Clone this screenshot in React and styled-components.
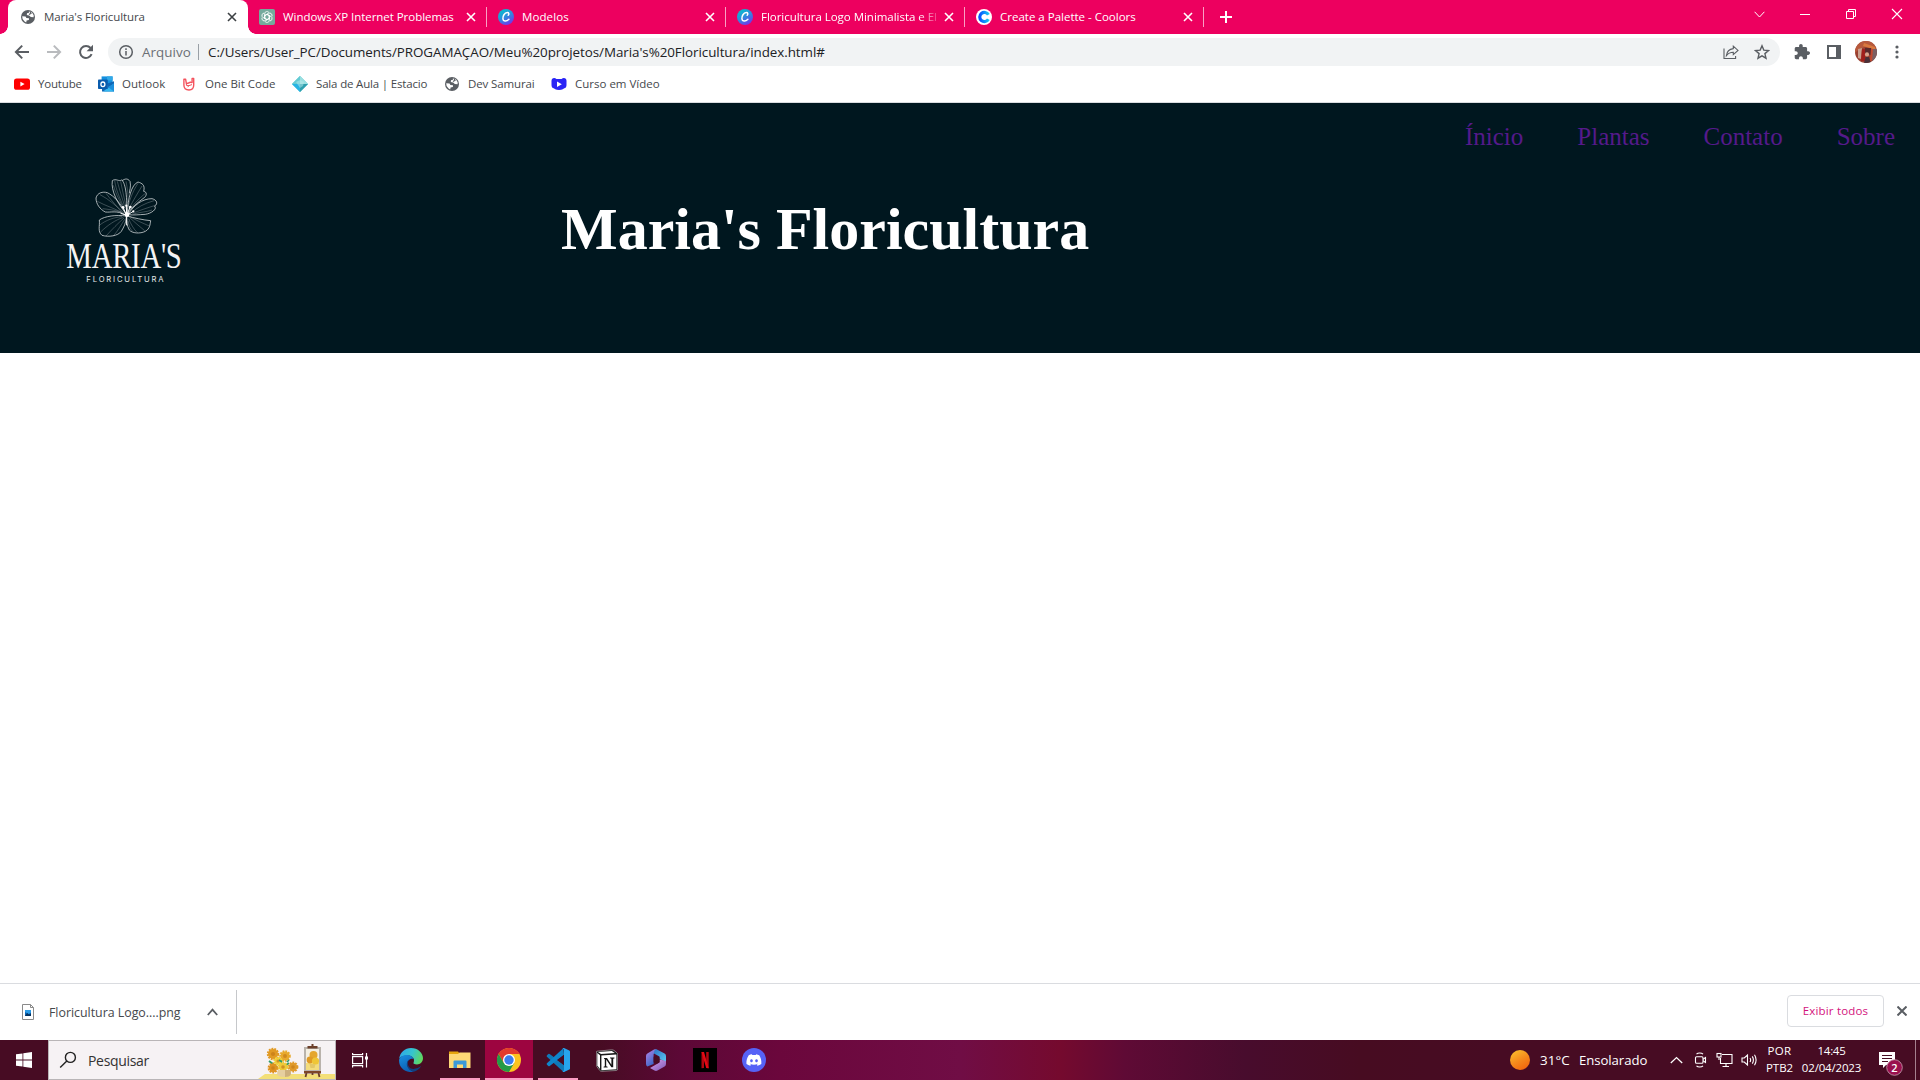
import React from 'react';
import styled, { createGlobalStyle } from 'styled-components';

const GlobalStyle = createGlobalStyle`
  * { box-sizing: border-box; }
  html, body { margin: 0; padding: 0; }
  body {
    width: 1920px;
    height: 1080px;
    overflow: hidden;
    background: #fff;
    font-family: "Open Sans", "Noto Sans", sans-serif;
  }
  svg { display: block; flex: none; }
`;

const Screen = styled.div`
  display: flex;
  flex-direction: column;
  width: 1920px;
  height: 1080px;
  background: #fff;
`;

const Label = styled.span`
  font-size: ${(p) => p.$size || 11.5}px;
  letter-spacing: ${(p) => p.$track || 0}px;
  color: ${(p) => p.$color || 'inherit'};
  line-height: 16px;
  white-space: nowrap;
`;

/* ---------- tab strip ---------- */

const TabStrip = styled.div`
  display: flex;
  height: 34px;
  padding-left: 8px;
  background: #ed005f;
  color: #fff;
`;

const ActiveTab = styled.div`
  position: relative;
  display: flex;
  align-items: center;
  width: 240px;
  height: 34px;
  padding: 0 8px 0 12px;
  gap: 8px;
  border-radius: 8px 8px 0 0;
  background: #fff;
  color: #45484c;
  &::before,
  &::after {
    content: '';
    position: absolute;
    bottom: 0;
    width: 8px;
    height: 8px;
  }
  &::before {
    left: -8px;
    background: radial-gradient(circle at 0 0, transparent 7.5px, #fff 8px);
  }
  &::after {
    right: -8px;
    background: radial-gradient(circle at 100% 0, transparent 7.5px, #fff 8px);
  }
`;

const Tab = styled.div`
  display: flex;
  align-items: center;
  width: 239px;
  height: 34px;
  padding: 0 8px 0 11px;
  gap: 8px;
  background: linear-gradient(#f9a0c4, #f9a0c4) right 7px / 1px 20px no-repeat;
`;

const TabTitle = styled(Label)`
  flex: 1;
  min-width: 0;
  ${(p) =>
    p.$fade &&
    `margin-right: -8px;
     mask-image: linear-gradient(90deg, #000 158px, transparent 182px);`}
`;

const NewTab = styled.div`
  display: flex;
  align-items: center;
  width: 44px;
  padding-left: 15px;
`;

const WindowControls = styled.div`
  display: flex;
  margin-left: auto;
  height: 28px;
`;

const WindowButton = styled.div`
  display: flex;
  align-items: center;
  justify-content: center;
  width: 46px;
  height: 28px;
`;

/* ---------- toolbar ---------- */

const Toolbar = styled.div`
  display: flex;
  align-items: center;
  height: 36px;
  padding-left: 12px;
`;

const NavButtons = styled.div`
  display: flex;
  gap: 12px;
  width: 96px;
`;

const Omnibox = styled.div`
  display: flex;
  flex: none;
  align-items: center;
  width: 1672px;
  height: 28px;
  padding: 0 10px 0 9px;
  border-radius: 14px;
  background: #f1f3f4;
`;

const Scheme = styled(Label)`
  width: 63px;
  padding-left: 7px;
`;

const Address = styled(Label)`
  display: flex;
  align-items: center;
  height: 16px;
  padding-left: 9px;
  border-left: 1px solid #9aa0a6;
  margin-right: auto;
`;

const OmniboxActions = styled.div`
  display: flex;
  gap: 15px;
`;

const ToolbarActions = styled.div`
  display: flex;
  align-items: center;
  padding-left: 14px;
`;

const ActionSlot = styled.div`
  display: flex;
  flex: none;
  justify-content: center;
  width: ${(p) => p.$w}px;
`;

const BookmarkBar = styled.div`
  display: flex;
  align-items: center;
  height: 33px;
  padding: 0 0 5px 14px;
  border-bottom: 1px solid #dadce0;
  color: #45484c;
`;

const Bookmark = styled.div`
  display: flex;
  align-items: center;
  gap: 8px;
  width: ${(p) => p.$w}px;
`;

/* ---------- page ---------- */

const SiteHeader = styled.header`
  height: 250px;
  background: #00171f;
`;

const SiteNav = styled.nav`
  display: flex;
  justify-content: flex-end;
  gap: 54px;
  height: 48px;
  padding: 20px 25px 0 0;
`;

const SiteLink = styled.a`
  font: 25px/28px "Liberation Serif", "Times New Roman", serif;
  color: #551a8b;
`;

const Brand = styled.div`
  display: flex;
  align-items: flex-start;
  padding: 9px 0 0 50px;
`;

const SiteTitle = styled.h1`
  margin: 35px 0 0 361px;
  font: bold 60px/68px "Liberation Serif", "Times New Roman", serif;
  color: #fff;
`;

const PageBody = styled.main`
  flex: 1;
  background: #fff;
`;

/* ---------- download shelf ---------- */

const Shelf = styled.div`
  display: flex;
  align-items: flex-start;
  height: 57px;
  padding-top: 6px;
  border-top: 1px solid #dadce0;
`;

const DownloadItem = styled.div`
  display: flex;
  align-items: center;
  width: 237px;
  height: 44px;
  padding: 0 18px 0 20px;
  border-right: 1px solid #c6c8cb;
`;

const DownloadName = styled(Label)`
  flex: 1;
  padding: 2px 0 0 13px;
`;

const ShowAll = styled.div`
  display: flex;
  align-items: center;
  justify-content: center;
  width: 97px;
  height: 32px;
  margin: 5px 13px 0 auto;
  border: 1px solid #dadce0;
  border-radius: 4px;
`;

const ShelfClose = styled.div`
  width: 23px;
  padding-top: 16px;
`;

/* ---------- taskbar ---------- */

const TaskBar = styled.div`
  display: flex;
  height: 40px;
  color: #fff;
  background: linear-gradient(
    90deg,
    #470c23 0,
    #470c23 600px,
    #5c0836 680px,
    #6b073c 780px,
    #700d45 960px,
    #750a2e 1060px,
    #5f0a35 1125px,
    #480c2d 1245px,
    #470c21 1360px,
    #470c23 1500px
  );
`;

const StartButton = styled.div`
  display: flex;
  align-items: center;
  justify-content: center;
  width: 48px;
`;

const SearchBox = styled.div`
  display: flex;
  align-items: center;
  width: 288px;
  padding-left: 10px;
  border: 1px solid #b9b5b7;
  background: #f6f2f4;
  color: #333;
`;

const SearchText = styled(Label)`
  flex: 1;
  padding: 2px 0 0 11px;
`;

const AppButton = styled.div`
  display: flex;
  align-items: center;
  justify-content: center;
  width: 48px;
  height: 40px;
  margin-right: ${(p) => p.$after || 1}px;
  background: ${(p) => (p.$active ? '#9d0540' : 'transparent')};
  ${(p) =>
    p.$running &&
    `background-image: linear-gradient(#fb9dc3, #fb9dc3);
     background-size: ${p.$active ? 48 : 40}px 2px;
     background-position: center bottom;
     background-repeat: no-repeat;`}
`;

const Tray = styled.div`
  display: flex;
  align-items: center;
  margin-left: auto;
`;

const Weather = styled.div`
  display: flex;
  align-items: center;
  gap: 9px;
  width: 160px;
`;

const Sun = styled.span`
  width: 20px;
  height: 20px;
  margin-right: 1px;
  border-radius: 50%;
  background: linear-gradient(150deg, #fbc02d 5%, #f68a1c 50%, #f2600c 95%);
`;

const TrayIcons = styled.div`
  display: flex;
  align-items: center;
  gap: 8px;
  width: 97px;
`;

const Overflow = styled.div`
  padding-right: 3px;
`;

const Stack = styled.div`
  display: flex;
  flex-direction: column;
  align-items: center;
  width: ${(p) => p.$w}px;
  gap: 1px;
  padding-bottom: 2px;
`;

const Notifications = styled.div`
  display: flex;
  width: 45px;
  height: 40px;
  padding: 8px 0 0 8px;
  border-right: 1px solid #a5808f;
  margin-right: 4px;
`;

/* ---------- icons ---------- */

const Globe = () => (
  <svg width="16" height="16" viewBox="0 0 16 16">
    <circle cx="8" cy="8" r="7" fill="#5a5e63" />
    <path d="M2.2 7.2 5.6 7.4 6.4 9 9 9.2 8.9 11 6.6 11.4 6.2 13.4 4.6 12.4 2.6 10Z" fill="#fff" />
    <path d="M8.8 2.4 9 3.8 7 4.2 6.8 6 9.2 6.6 10.8 8 13.6 8.2 13.7 6.2 12.2 3.8 10.6 2.6Z" fill="#fff" />
    <path d="M9.9 2.3 11 4.2 9 5.4" stroke="#5a5e63" strokeWidth="1.2" fill="none" />
  </svg>
);

const Close = ({ size = 8, color = '#fff', w = 1.6, box = 16 }) => (
  <svg width={box} height={box} viewBox={`${-box / 2} ${-box / 2} ${box} ${box}`}>
    <path
      d={`M${-size / 2} ${-size / 2} L${size / 2} ${size / 2} M${size / 2} ${-size / 2} L${-size / 2} ${size / 2}`}
      stroke={color}
      strokeWidth={w}
    />
  </svg>
);

const ChatGpt = () => (
  <svg width="16" height="16" viewBox="0 0 16 16">
    <rect width="16" height="16" rx="2" fill="#74aa9c" />
    <g fill="none" stroke="#fff" strokeWidth=".8">
      {[0, 60, 120, 180, 240, 300].map((a) => (
        <path key={a} transform={`rotate(${a} 8 8)`} d="M5.6 9.2V4.9A2.4 2.4 0 0 1 10 3.6M5.8 6.7 8 5.4 11 7" />
      ))}
    </g>
  </svg>
);

const Canva = ({ id }) => (
  <svg width="16" height="16" viewBox="0 0 16 16">
    <defs>
      <linearGradient id={id} x1=".1" y1="0" x2=".7" y2="1">
        <stop offset="0" stopColor="#00c9c8" />
        <stop offset=".5" stopColor="#2d8fdd" />
        <stop offset="1" stopColor="#7433ea" />
      </linearGradient>
    </defs>
    <circle cx="8" cy="8" r="8" fill={`url(#${id})`} />
    <path
      d="M10.2 6.2C11.3 5.200 10.900 3.400 9.200 3.600 6.600 3.800 4.600 7 4.900 9.800 5.200 12.600 8.400 13 10.900 10.200"
      fill="none"
      stroke="#fff"
      strokeWidth="1.5"
      strokeLinecap="round"
    />
  </svg>
);

const Coolors = () => (
  <svg width="16" height="16" viewBox="0 0 16 16">
    <defs>
      <linearGradient id="coolors" x1="0" x2="1">
        <stop offset="0" stopColor="#0a52ff" />
        <stop offset="1" stopColor="#12c4f5" />
      </linearGradient>
    </defs>
    <circle cx="8" cy="8" r="8" fill="#fff" />
    <path d="M12.400 5.800A4.600 4.600 0 1 0 12.400 10.200" fill="none" stroke="url(#coolors)" strokeWidth="3.200" />
  </svg>
);

const BackArrow = ({ color, flip }) => (
  <svg width="20" height="20" viewBox="0 0 20 20">
    <path
      transform={flip ? 'matrix(-1 0 0 1 20 0)' : undefined}
      d="M17 10H4.2M10.2 3.6 3.9 10l6.3 6.4"
      fill="none"
      stroke={color}
      strokeWidth="2"
    />
  </svg>
);

const Reload = () => (
  <svg width="20" height="20" viewBox="0 0 20 20">
    <path d="M15.6 12.2A6 6 0 1 1 14.6 6" fill="none" stroke="#5a5e63" strokeWidth="2" />
    <path d="M17 2.8V9.2H10.6Z" fill="#5a5e63" />
  </svg>
);

const Info = () => (
  <svg width="18" height="18" viewBox="0 0 18 18">
    <circle cx="9" cy="9" r="6.3" fill="none" stroke="#5a5e63" strokeWidth="1.5" />
    <path d="M9 8v4.6M9 5.2v1.7" stroke="#5a5e63" strokeWidth="1.5" />
  </svg>
);

const Share = () => (
  <svg width="16" height="16" viewBox="0 0 16 16" fill="none" stroke="#5a5e63" strokeWidth="1.1">
    <path d="M1 4.4V14.5H12.6V12" />
    <path d="M10.3 2.2 15 6.4 10.3 10.6V8.2C7.2 8.2 5 9.4 3.4 11.6 3.8 7.8 6.4 5 10.3 4.6Z" />
  </svg>
);

const Star = () => (
  <svg width="16" height="16" viewBox="0 0 16 16">
    <path
      d="m8 1.8 1.8 4.3 4.7.4-3.6 3.1 1.1 4.6L8 11.8l-4 2.4 1.1-4.6L1.5 6.5l4.7-.4Z"
      fill="none"
      stroke="#5a5e63"
      strokeWidth="1.4"
    />
  </svg>
);

const Puzzle = () => (
  <svg width="16" height="16" viewBox="1 1 22 22" fill="#5a5e63">
    <path d="M20.5 11H19V7c0-1.1-.9-2-2-2h-4V3.5C13 2.12 11.88 1 10.5 1S8 2.12 8 3.5V5H4c-1.1 0-1.99.9-1.99 2v3.8H3.5c1.49 0 2.7 1.21 2.7 2.7s-1.21 2.7-2.7 2.7H2V20c0 1.1.9 2 2 2h3.8v-1.5c0-1.49 1.21-2.7 2.7-2.7 1.49 0 2.7 1.21 2.7 2.7V22H17c1.1 0 2-.9 2-2v-4h1.5c1.38 0 2.5-1.12 2.5-2.5S21.88 11 20.5 11z" />
  </svg>
);

const SidePanel = () => (
  <svg width="14" height="14" viewBox="0 0 14 14">
    <rect width="14" height="14" fill="#5a5e63" />
    <rect x="2" y="2" width="7" height="10" fill="#fff" />
  </svg>
);

const Avatar = () => (
  <svg width="22" height="22" viewBox="0 0 22 22">
    <defs>
      <clipPath id="avatar">
        <circle cx="11" cy="11" r="11" />
      </clipPath>
    </defs>
    <g clipPath="url(#avatar)">
      <rect width="22" height="22" fill="#9a4030" />
      <path d="M0 0H22V7L13 5 4 8 0 12Z" fill="#b7593c" />
      <path d="M9 2 20 6 21 9 8 5Z" fill="#d9793f" />
      <path d="M3 8 7 7 6 18 3 17Z" fill="#c9a08f" />
      <path d="M7 8H10V20H6Z" fill="#a11f1c" />
      <path d="M10 7H16V14H10Z" fill="#5a2a2c" />
      <circle cx="12" cy="13.4" r="2.1" fill="#d9a48c" />
      <path d="M9 22 10.5 16 14 16 16 22Z" fill="#4a3038" />
      <path d="M16 8 18 8 18 19 15 20Z" fill="#c4482f" />
      <path d="M18 8H22V20H17Z" fill="#7a5f62" />
    </g>
  </svg>
);

const Dots = () => (
  <svg width="4" height="14" viewBox="0 0 4 14" fill="#5a5e63">
    <circle cx="2" cy="2" r="1.6" />
    <circle cx="2" cy="7" r="1.6" />
    <circle cx="2" cy="12" r="1.6" />
  </svg>
);

const YoutubeIcon = () => (
  <svg width="16" height="16" viewBox="0 0 16 16">
    <rect y="2.4" width="16" height="11.4" rx="2.6" fill="#f00" />
    <path d="M6.4 5.7 10.6 8.1 6.4 10.5Z" fill="#fff" />
  </svg>
);

const OutlookIcon = () => (
  <svg width="16" height="16" viewBox="0 0 16 16">
    <rect x="3.6" y=".4" width="11" height="9" fill="#1490df" />
    <rect x="9" y=".4" width="5.6" height="4" fill="#32a9e7" />
    <path d="M9.4 7.5 16 5.2V15.4H4V12H9.4Z" fill="#1066b5" />
    <path d="M16 7.5V15.6H5Z" fill="#35b8f1" />
    <path d="M16 7.5 10 11 16 15.6Z" fill="#1c8fdc" />
    <rect y="3.6" width="9.8" height="9.4" rx=".8" fill="#0a5cad" />
    <ellipse cx="4.9" cy="8.3" rx="2" ry="2.3" fill="none" stroke="#fff" strokeWidth="1.3" />
  </svg>
);

const OneBitIcon = () => (
  <svg width="16" height="16" viewBox="0 0 16 16">
    <path
      d="M2.900 3.200V9C2.900 12.200 5 14 8 14 11 14 12.700 12.200 12.700 9V2.400H11.100V6.600L9.400 6.200 7.600 7 5.400 7.600 4.600 3.200Z"
      fill="#fff"
      stroke="#f4525d"
      strokeWidth="1.400"
      strokeLinejoin="round"
    />
    <path d="M5.400 7.600V9.400L8 9.600 6.600 11.200M8 9.600 11 8.600" fill="none" stroke="#f4525d" strokeWidth="1" />
  </svg>
);

const EstacioIcon = () => (
  <svg width="16" height="16" viewBox="0 0 16 16">
    <path d="M8 0 16 8 8 16 0 8Z" fill="#45c3cf" />
    <path d="M8 0 16 8H8Z" fill="#9adfe0" />
    <path d="M8 0V8H0Z" fill="#64cbd4" />
    <path d="M8 16 16 8H8Z" fill="#2f9fae" />
    <path d="M8 16V8H0Z" fill="#27b4e4" />
    <path d="M4 6 8 4 12 6 11 10 8 12Z" fill="#b9ecec" opacity=".5" />
  </svg>
);

const CursoIcon = () => (
  <svg width="16" height="16" viewBox="0 0 16 16">
    <circle cx="3.200" cy="4.600" r="2.600" fill="#2a24f5" />
    <circle cx="12.800" cy="4.600" r="2.600" fill="#2a24f5" />
    <rect x=".5" y="3" width="15" height="9.600" rx="3.600" fill="#2a24f5" />
    <ellipse cx="8" cy="11.500" rx="5" ry="2.400" fill="#2a24f5" />
    <path d="M6 5.6 10.8 8.3 6 11Z" fill="#fff" />
  </svg>
);

const Vein = styled.path`
  fill: none;
  stroke: #c9d0d2;
  stroke-width: 1.2;
  opacity: 0.75;
`;

const Petal = styled.path`
  fill: none;
  stroke: #dfe4e5;
  stroke-width: 2.2;
`;

const BrandLogo = () => (
  <svg width="150" height="130" viewBox="0 0 450 390">
    <Petal d="M228 165C200 150 182 158 166 156 150 148 138 132 138 114 142 98 158 94 172 98 192 108 214 130 228 165" />
    <Petal d="M226 158C204 132 182 92 187 62 197 54 208 66 214 60 222 62 232 90 230 155" />
    <Petal d="M216 62C226 56 232 54 240 64 244 80 238 92 238 100" />
    <Petal d="M232 158C234 116 244 74 264 66 276 70 286 74 281 94 292 96 290 106 284 112 262 128 246 142 233 160" />
    <Petal d="M235 162C252 136 276 116 306 116 322 120 324 132 314 138 322 148 304 160 286 163 266 164 250 166 235 164" />
    <Petal d="M232 168C252 174 280 180 302 182 300 194 300 206 286 214 270 222 246 220 238 210 230 196 230 184 230 170" />
    <Petal d="M228 168C200 164 164 168 148 180 150 198 142 214 156 226 176 232 204 228 214 214 222 200 228 190 229 170" />
    <Vein d="M222 158C200 140 178 118 150 104M220 160C196 146 168 138 142 124M216 158C196 134 180 116 168 100M214 156C190 150 176 148 158 146" />
    <Vein d="M224 148C210 116 198 90 194 62M226 146C216 112 208 88 202 64M228 140C222 110 216 86 212 64M216 136C206 116 196 98 190 76" />
    <Vein d="M234 144C240 112 252 88 264 70M236 148C250 120 264 98 276 78M238 150C256 126 272 112 286 100M233 130C236 108 232 84 228 64" />
    <Vein d="M244 158C262 142 284 130 312 122M246 160C268 152 290 144 316 136M250 162C272 156 290 156 306 150" />
    <Vein d="M238 172C252 184 268 200 284 212M240 170C260 182 280 190 298 198M236 176C242 192 250 206 262 218M234 182C236 196 240 206 248 214" />
    <Vein d="M220 172C196 180 172 196 152 216M222 174C204 190 186 208 168 228M216 170C192 172 168 180 148 196M224 178C214 194 204 212 190 228" />
    <path
      d="M230 166 219 142M230 166 229 136M230 166 241 140M230 166 250 154M230 166 212 160M230 166V196"
      stroke="#fff"
      strokeWidth="3"
      fill="none"
    />
    <g fill="#fff">
      <circle cx="219" cy="142" r="4" />
      <circle cx="229" cy="137" r="3.4" />
      <circle cx="241" cy="141" r="4" />
      <circle cx="250" cy="154" r="3.4" />
      <circle cx="231" cy="164" r="7" />
    </g>
    <text
      transform="translate(49 323) scale(.785 1)"
      fontFamily="Liberation Serif, Times New Roman, serif"
      fontSize="110"
      letterSpacing="-1"
      fill="#f4f4f4"
    >
      MARIA&apos;S
    </text>
    <text
      x="109"
      y="365"
      textLength="232"
      fontFamily="Inter, sans-serif"
      fontSize="23"
      fill="#e4e8e9"
    >
      FLORICULTURA
    </text>
  </svg>
);

const FileIcon = () => (
  <svg width="16" height="18" viewBox="0 0 16 18">
    <path d="M2.5 1.5H10.5L13.5 4.5V16.5H2.5Z" fill="#fff" stroke="#8a8a8a" />
    <path d="M10.5 1.5V4.5H13.5" fill="none" stroke="#8a8a8a" />
    <rect x="5" y="7" width="6" height="6" fill="#0c64b4" />
    <path d="M5 7H11V9.4L8.6 11 5 9Z" fill="#2b9be6" />
    <path d="M5 13 7.2 10 9 11.6 11 10.6V13Z" fill="#07335f" />
  </svg>
);

const WindowsLogo = () => (
  <svg width="16" height="16" viewBox="0 0 16 16" fill="#fff">
    <path d="M0 2.3 6.5 1.4V7.5H0ZM7.3 1.3 16 0V7.5H7.3ZM0 8.4H6.5V14.6L0 13.7ZM7.3 8.4H16V16L7.3 14.7Z" />
  </svg>
);

const SearchIcon = () => (
  <svg width="18" height="18" viewBox="0 0 18 18" fill="none" stroke="#222" strokeWidth="1.4">
    <circle cx="11.4" cy="6.4" r="5" />
    <path d="M7.8 10 1.2 16.6" />
  </svg>
);

const blooms = [
  [34, 13, 6, '#e19a24'],
  [46, 15, 5.6, '#e8a92c'],
  [34, 27, 5.2, '#df9322'],
  [54, 26, 5.2, '#e09a2a'],
  [44, 26, 5.2, '#efc93a'],
  [39, 20, 4.4, '#f1cf3c'],
];

const Sunflowers = () => (
  <svg width="80" height="38" viewBox="0 0 80 38">
    <path d="M10 33H80V38H3Z" fill="#f3df78" />
    <g transform="translate(-16 0)">
      <path d="M38 26 30 20M44 26 50 22M42 26V18" stroke="#2f9c6c" strokeWidth="2" />
      {blooms.map(([x, y, r, c], i) => (
        <g key={i}>
          <circle cx={x} cy={y} r={r - 1} fill={c} />
          <circle cx={x} cy={y} r={r - 0.8} fill="none" stroke={c} strokeWidth="2" strokeDasharray="1.8 1" />
          <circle cx={x} cy={y} r={r * 0.35} fill="#c57a18" opacity=".7" />
        </g>
      ))}
      <path d="M40 19 43 21M48 21 50 19" stroke="#2f9c6c" strokeWidth="1.600" />
      <path d="M39 29H51C53 33 52 36 45 36 38 36 37 33 39 29Z" fill="#e6cf9f" />
      <path d="M46 29H51C53 33 52 36 46 36Z" fill="#cdb07c" />
    </g>
    <g transform="translate(-13.500 0)">
      <rect x="62.500" y="6" width="17" height="25" fill="#b9b3ac" />
      <rect x="64.500" y="8" width="13" height="21" fill="#f4efe2" />
      <rect x="64.500" y="22" width="13" height="7" fill="#f3dc7c" />
      <rect x="66" y="5" width="10" height="2.500" fill="#6b3f2a" />
      <rect x="70" y="3" width="2" height="4" fill="#6b3f2a" />
      <rect x="62.500" y="30" width="17" height="2.500" fill="#7d4729" />
      <path d="M65 32 64 36M77 32 78 36M71 32V34" stroke="#6b3f2a" strokeWidth="1.800" />
      <circle cx="72" cy="14" r="4" fill="#e5a62c" />
      <circle cx="68.500" cy="19" r="3.400" fill="#e09a24" />
      <circle cx="74" cy="20" r="3.600" fill="#efc636" />
      <path d="M68 23H74L73 27H69Z" fill="#e3c766" />
    </g>
  </svg>
);

const TaskView = () => (
  <svg width="18" height="16" viewBox="0 0 18 16" fill="none" stroke="#fff" strokeWidth="1.2">
    <rect x="1.600" y="4.600" width="10" height="7" />
    <path d="M1.600 1V2.600H11.600V1M1.600 15.400V13.600H11.600V15.400M15.500 1V15.400" />
    <rect x="14" y="4.500" width="3" height="3" fill="#fff" stroke="none" />
  </svg>
);

const Edge = () => (
  <svg width="24" height="24" viewBox="0 0 24 24">
    <defs>
      <linearGradient id="edgeTop" x1="0" y1=".3" x2="1" y2=".6">
        <stop offset="0" stopColor="#2ea9e8" />
        <stop offset=".5" stopColor="#36c4cf" />
        <stop offset="1" stopColor="#62d95a" />
      </linearGradient>
      <linearGradient id="edgeLow" x1="0" y1="0" x2=".4" y2="1">
        <stop offset="0" stopColor="#1990e0" />
        <stop offset="1" stopColor="#0d5fb4" />
      </linearGradient>
    </defs>
    <path d="M.2 10.600C1 4.500 6 0 12 0 19 0 24 5 24 10.300 24 14 21.200 16.400 18 16.400 15.400 16.400 14 15.600 14 14.800 14.400 14 15 13.500 15 12 15 9.600 12 7.600 8.600 7.600 5 7.600 2 8.400.2 10.600Z" fill="url(#edgeTop)" />
    <path d="M.1 12C.4 9 4 7 8 7 11.600 7 14 9 14.800 11 12.600 9.800 8.300 11.600 8.300 16 8.300 19.600 11.400 22.600 14.600 23.700 6.400 25.600-.4 19.400.1 12Z" fill="url(#edgeLow)" />
    <path d="M10.500 11.200C8 13.500 8.400 18 11.400 20.200 15 22 19.600 20 22.300 17.800 20.600 21 17.600 23.200 14.600 23.700 10.800 22.800 7.600 19.600 7.800 15.600 8 13.400 9 12 10.500 11.200Z" fill="#123f7f" />
    <circle cx="12.500" cy="14" r="2.200" fill="#470c23" />
  </svg>
);

const Explorer = () => (
  <svg width="22" height="20" viewBox="0 0 22 20">
    <path d="M0 1.500H9L11 4H0Z" fill="#e5a50e" />
    <path d="M0 4H9L10.500 2.500H21.500V18H0Z" fill="#fdd877" />
    <path d="M4.500 18V11.500Q4.500 10.500 5.500 10.500H16.500Q17.500 10.500 17.500 11.500V18H14V14.500H8V18Z" fill="#3c97d9" />
  </svg>
);

const Chrome = () => (
  <svg width="24" height="24" viewBox="0 0 24 24">
    <circle cx="12" cy="12" r="12" fill="#fcc31e" />
    <path d="M1.600 6A12 12 0 0 1 22.400 6H12L6.800 15Z" fill="#e33b2e" />
    <path d="M1.600 6A12 12 0 0 0 12 24L17.200 15H6.800Z" fill="#249a48" />
    <circle cx="12" cy="12" r="6" fill="#fff" />
    <circle cx="12" cy="12" r="4.700" fill="#3b7ded" />
  </svg>
);

const VsCode = () => (
  <svg width="24" height="24" viewBox="0 0 24 24">
    <path d="M1 7.200 2.300 6Q3 5.600 3.700 6.100L23 20.500 18 23.800 17 23.600.9 8.700Q.3 8 1 7.200Z" fill="#1079b9" />
    <path d="M1 16.800 2.300 18Q3 18.400 3.700 17.900L18 7 17.400.3 17 .4.9 15.300Q.3 16 1 16.800Z" fill="#0f85cb" />
    <path d="M18 0 23.300 2.400Q24 2.800 24 3.600V20.400Q24 21.200 23.300 21.600L18 24Q17 24.200 16.600 23.400L18 22.500V1.500L16.600.6Q17-.2 18 0Z" fill="#27a4ee" />
    <path d="M18 6.700V17.300L11 12Z" fill="#470c23" />
  </svg>
);

const Notion = () => (
  <svg width="22" height="23" viewBox="0 0 22 23">
    <path d="M1 2.200 15.500.8Q17 .7 18 1.400L21 3.800Q21.600 4.300 21.600 5.200V20Q21.600 21.400 20.200 21.500L5.600 22.300Q4.400 22.300 3.700 21.400L1 17.800Q.4 17 .4 16V3Q.4 2.300 1 2.200Z" fill="#1a1a1a" stroke="#d8d8d8" strokeWidth=".5" />
    <path d="M2 3.100 15.800 2 18.800 4 5 4.900Z" fill="#fff" />
    <path d="M1.300 4 4 6.200V20L1.300 16.600Z" fill="#fff" />
    <path d="M5.400 6.400 20.400 5.500V20.300L5.400 21.200Z" fill="#fff" />
    <path d="M8 9H11L15.400 15.800V9.800L14 9.300V8.600H18.400V9.400L17.200 9.800V18.200H15.400L10.200 10.500V17.300L11.600 17.800V18.500H7.600V17.800L8.800 17.300V9.900L8 9.700Z" fill="#141414" />
  </svg>
);

const M365 = () => (
  <svg width="22" height="24" viewBox="0 0 22 24">
    <defs>
      <linearGradient id="mLeft" x1="0" y1="0" x2=".6" y2="1">
        <stop offset="0" stopColor="#b985e8" />
        <stop offset="1" stopColor="#3566c5" />
      </linearGradient>
      <linearGradient id="mRight" x1="0" y1="0" x2="1" y2="1">
        <stop offset="0" stopColor="#2b6cc4" />
        <stop offset="1" stopColor="#5ccaf3" />
      </linearGradient>
      <linearGradient id="mLow" x1="0" y1="0" x2="1" y2="1">
        <stop offset="0" stopColor="#dba5f0" />
        <stop offset="1" stopColor="#7b56b4" />
      </linearGradient>
    </defs>
    <path d="M11 1 19.600 5.600Q21 6.400 21 8V14L14.500 11V8.600L9 5.400 7.400 7 7 4Z" fill="url(#mRight)" />
    <path d="M11 1Q8.600 3 8.600 6V16L2.400 18.400Q1 17.600 1 16V8Q1 6.400 2.400 5.600L9 1.500Q10 1 11 1Z" fill="url(#mLeft)" />
    <path d="M5 20 14.500 14.500V11.500L21 13V16Q21 17.600 19.600 18.400L12.500 22.600Q11 23.400 9.500 22.600Z" fill="url(#mLow)" />
    <path d="M8.600 8.800 11 7.500 14.500 9.400V14L11.500 16 8.600 14.300Z" fill="#470c23" />
  </svg>
);

const Netflix = () => (
  <svg width="24" height="24" viewBox="0 0 24 24">
    <rect width="24" height="24" fill="#000" />
    <path d="M8.500 4H11V20L8.500 20.300ZM13.200 4H15.700V20.300L13.200 20Z" fill="#b20710" />
    <path d="M8.500 4H11L15.700 20.300 13.200 20Z" fill="#e50914" />
  </svg>
);

const Discord = () => (
  <svg width="24" height="24" viewBox="0 0 24 24">
    <circle cx="12" cy="12" r="12" fill="#5662f6" />
    <g transform="translate(4.400 4.500) scale(.633)">
      <path
        fill="#fff"
        d="M20.317 4.370a19.790 19.790 0 0 0-4.885-1.515c-.21.375-.444.865-.608 1.250a18.270 18.270 0 0 0-5.487 0c-.164-.394-.405-.875-.617-1.250A19.740 19.740 0 0 0 3.677 4.370C.533 9.046-.320 13.580.099 18.058a19.900 19.900 0 0 0 5.993 3.030c.462-.630.874-1.295 1.226-1.994a13.100 13.100 0 0 1-1.872-.892l.372-.292c3.928 1.793 8.180 1.793 12.062 0l.373.292a12.300 12.300 0 0 1-1.873.892c.360.698.772 1.362 1.225 1.993a19.840 19.840 0 0 0 6.002-3.030c.500-5.177-.838-9.674-3.290-13.687ZM8.020 15.330c-1.183 0-2.157-1.085-2.157-2.419s.955-2.419 2.157-2.419 2.176 1.096 2.157 2.419c0 1.334-.956 2.419-2.157 2.419Zm7.975 0c-1.183 0-2.157-1.085-2.157-2.419s.955-2.419 2.157-2.419 2.176 1.096 2.157 2.419c0 1.334-.946 2.419-2.157 2.419Z"
      />
    </g>
  </svg>
);

const Chevron = ({ w, h, color, stroke, down }) => (
  <svg width={w} height={h} viewBox={`0 0 ${w} ${h}`}>
    <path
      d={down ? `M.6 .8 L${w / 2} ${h - 1} L${w - 0.6} .8` : `M.8 ${h - 1} L${w / 2} 1.6 L${w - 0.8} ${h - 1}`}
      fill="none"
      stroke={color}
      strokeWidth={stroke}
    />
  </svg>
);

const MeetNow = () => (
  <svg width="14" height="16" viewBox="0 0 14 16" fill="none" stroke="#fff" strokeWidth="1.1">
    <rect x="1.500" y="4.700" width="7.500" height="6.600" rx="1" />
    <path d="M9 7.200 11.500 5.600V10.400L9 8.800M2.500 2.200C4 .6 7.500 .6 9 2.200M2.500 13.800C4 15.400 7.500 15.400 9 13.800" />
  </svg>
);

const Network = () => (
  <svg width="17" height="16" viewBox="0 0 17 16" fill="none" stroke="#fff" strokeWidth="1.1">
    <path d="M6 2.500H16V11.500H4.500V6M10 11.500V14.500M6.500 14.500H13" />
    <rect x="1" y="1.500" width="4" height="3.500" />
    <path d="M3 5V8" />
  </svg>
);

const Volume = () => (
  <svg width="17" height="14" viewBox="0 0 17 14" fill="none" stroke="#fff" strokeWidth="1.100">
    <path d="M1 5H3.300L6.500 2V12L3.300 9H1ZM9 5Q10.300 7 9 9M11.300 3.400Q13.500 7 11.300 10.600M13.500 1.800Q16.700 7 13.500 12.200" />
  </svg>
);

const NoticeIcon = () => (
  <svg width="26" height="30" viewBox="0 0 26 30">
    <path d="M0 4H16V17H7L4 20V17H0Z" fill="#fff" />
    <path d="M3 7.500H13M3 10.500H13M3 13.500H9" stroke="#470c23" strokeWidth="1.100" />
    <circle cx="15.500" cy="19.500" r="7.800" fill="#9a0f4e" stroke="#c9a0b2" strokeWidth=".8" />
    <text x="15.500" y="23.500" textAnchor="middle" fontFamily="Open Sans, sans-serif" fontWeight="600" fontSize="11" fill="#fff">
      2
    </text>
  </svg>
);

/* ---------- data ---------- */

const tabs = [
  { icon: <ChatGpt />, title: 'Windows XP Internet Problemas', track: -0.042 },
  { icon: <Canva id="canvaA" />, title: 'Modelos', track: 0.1 },
  { icon: <Canva id="canvaB" />, title: 'Floricultura Logo Minimalista e El', track: -0.026, fade: true },
  { icon: <Coolors />, title: 'Create a Palette - Coolors', track: 0 },
];

const bookmarks = [
  { icon: <YoutubeIcon />, title: 'Youtube', track: -0.18, w: 84 },
  { icon: <OutlookIcon />, title: 'Outlook', track: 0.05, w: 83 },
  { icon: <OneBitIcon />, title: 'One Bit Code', track: 0, w: 111 },
  { icon: <EstacioIcon />, title: 'Sala de Aula | Estacio', track: -0.17, w: 152 },
  { icon: <Globe />, title: 'Dev Samurai', track: -0.12, w: 107 },
  { icon: <CursoIcon />, title: 'Curso em Vídeo', track: 0, w: 120 },
];

const apps = [
  { icon: <Edge /> },
  { icon: <Explorer />, running: true },
  { icon: <Chrome />, running: true, active: true },
  { icon: <VsCode />, running: true },
  { icon: <Notion /> },
  { icon: <M365 /> },
  { icon: <Netflix /> },
  { icon: <Discord /> },
];

export default function App() {
  return (
    <Screen>
      <GlobalStyle />
      <TabStrip>
        <ActiveTab>
          <Globe />
          <TabTitle $track={-0.099}>Maria&apos;s Floricultura</TabTitle>
          <Close color="#3c4043" />
        </ActiveTab>
        {tabs.map((t) => (
          <Tab key={t.title}>
            {t.icon}
            <TabTitle $track={t.track} $fade={t.fade}>
              {t.title}
            </TabTitle>
            <Close />
          </Tab>
        ))}
        <NewTab>
          <svg width="14" height="14" viewBox="0 0 14 14">
            <path d="M7 1V13M1 7H13" stroke="#fff" strokeWidth="2" />
          </svg>
        </NewTab>
        <WindowControls>
          <WindowButton>
            <Chevron w={11} h={7} color="#fff" stroke={1} down />
          </WindowButton>
          <WindowButton>
            <svg width="10" height="10" viewBox="0 0 10 10">
              <path d="M0 5.5H10" stroke="#fff" />
            </svg>
          </WindowButton>
          <WindowButton>
            <svg width="10" height="10" viewBox="0 0 10 10" fill="none" stroke="#fff">
              <path d="M.5 2.500H7.500V9.500H.5ZM2.500 2.500V.5H9.500V7.500H7.500" />
            </svg>
          </WindowButton>
          <WindowButton>
            <Close size={10} w={1.1} />
          </WindowButton>
        </WindowControls>
      </TabStrip>

      <Toolbar>
        <NavButtons>
          <BackArrow color="#5a5e63" />
          <BackArrow color="#b9bbbe" flip />
          <Reload />
        </NavButtons>
        <Omnibox>
          <Info />
          <Scheme $size={13.4} $track={0.04} $color="#6b6f74">
            Arquivo
          </Scheme>
          <Address $size={13.4} $track={-0.055} $color="#202124">
            C:/Users/User_PC/Documents/PROGAMAÇAO/Meu%20projetos/Maria&apos;s%20Floricultura/index.html#
          </Address>
          <OmniboxActions>
            <Share />
            <Star />
          </OmniboxActions>
        </Omnibox>
        <ToolbarActions>
          <ActionSlot $w={16}>
            <Puzzle />
          </ActionSlot>
          <ActionSlot $w={48}>
            <SidePanel />
          </ActionSlot>
          <ActionSlot $w={16}>
            <Avatar />
          </ActionSlot>
          <ActionSlot $w={46}>
            <Dots />
          </ActionSlot>
        </ToolbarActions>
      </Toolbar>

      <BookmarkBar>
        {bookmarks.map((b) => (
          <Bookmark key={b.title} $w={b.w}>
            {b.icon}
            <Label $track={b.track}>{b.title}</Label>
          </Bookmark>
        ))}
      </BookmarkBar>

      <SiteHeader>
        <SiteNav>
          {['Ínicio', 'Plantas', 'Contato', 'Sobre'].map((l) => (
            <SiteLink key={l}>{l}</SiteLink>
          ))}
        </SiteNav>
        <Brand>
          <BrandLogo />
          <SiteTitle>Maria&apos;s Floricultura</SiteTitle>
        </Brand>
      </SiteHeader>
      <PageBody />

      <Shelf>
        <DownloadItem>
          <FileIcon />
          <DownloadName $size={12.4} $track={-0.02} $color="#45484c">
            Floricultura Logo....png
          </DownloadName>
          <Chevron w={11} h={8} color="#5a5e63" stroke={1.8} />
        </DownloadItem>
        <ShowAll>
          <Label $track={0.18} $color="#d3127c">
            Exibir todos
          </Label>
        </ShowAll>
        <ShelfClose>
          <Close size={9} color="#5a5e63" w={2} box={10} />
        </ShelfClose>
      </Shelf>

      <TaskBar>
        <StartButton>
          <WindowsLogo />
        </StartButton>
        <SearchBox>
          <SearchIcon />
          <SearchText $size={14} $track={-0.32}>
            Pesquisar
          </SearchText>
          <Sunflowers />
        </SearchBox>
        <AppButton $after={3}>
          <TaskView />
        </AppButton>
        {apps.map((a, i) => (
          <AppButton key={i} $active={a.active} $running={a.running}>
            {a.icon}
          </AppButton>
        ))}
        <Tray>
          <Weather>
            <Sun />
            <Label $size={13.4} $track={0.1}>
              31°C
            </Label>
            <Label $size={13.2} $track={-0.06}>
              Ensolarado
            </Label>
          </Weather>
          <TrayIcons>
            <Overflow>
              <Chevron w={13} h={8} color="#fff" stroke={1.3} />
            </Overflow>
            <MeetNow />
            <Network />
            <Volume />
          </TrayIcons>
          <Stack $w={25}>
            <Label $track={0.3}>POR</Label>
            <Label>PTB2</Label>
          </Stack>
          <Stack $w={79}>
            <Label $track={-0.3}>14:45</Label>
            <Label $track={-0.175}>02/04/2023</Label>
          </Stack>
          <Notifications>
            <NoticeIcon />
          </Notifications>
        </Tray>
      </TaskBar>
    </Screen>
  );
}
